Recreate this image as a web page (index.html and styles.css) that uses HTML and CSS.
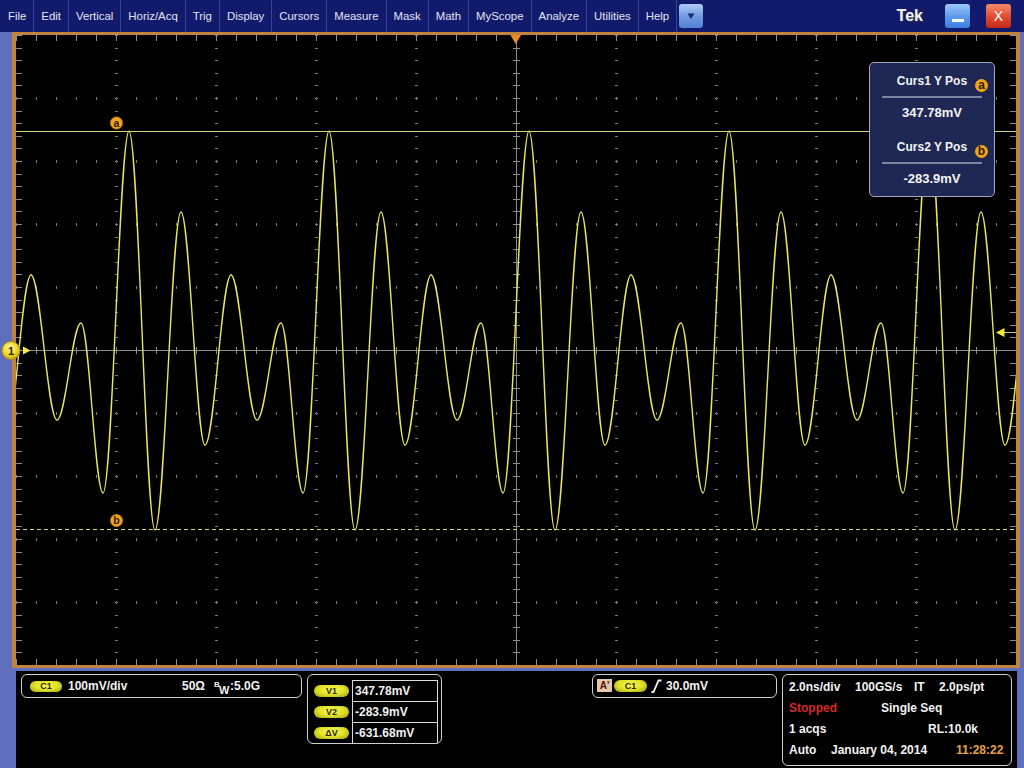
FILE: index.html
```html
<!DOCTYPE html>
<html>
<head>
<meta charset="utf-8">
<link rel="stylesheet" href="styles.css">
</head>
<body>
<div class="menubar">
  <nav class="menu">
    <span class="mi">File</span><span class="mi">Edit</span><span class="mi">Vertical</span><span class="mi">Horiz/Acq</span><span class="mi">Trig</span><span class="mi">Display</span><span class="mi">Cursors</span><span class="mi">Measure</span><span class="mi">Mask</span><span class="mi">Math</span><span class="mi">MyScope</span><span class="mi">Analyze</span><span class="mi">Utilities</span><span class="mi">Help</span>
  </nav>
  <span class="dd"><svg width="10" height="8" viewBox="0 0 10 8"><polygon points="1.5,1.5 8.5,1.5 5,7" fill="#1c2a7a"/></svg></span>
  <div class="win">
    <span class="tek">Tek</span>
    <span class="wbtn min"><span class="minbar"></span></span>
    <span class="wbtn close">X</span>
  </div>
</div>

<div class="scope">
  <svg class="grat" width="1000" height="630" viewBox="16 35 1000 630">
    <defs>
      <path id="period" d="M0,0 c9.45,0 16.55,145 26,145 c8.72,0 15.28,-97 24,-97 c8,0 14,170 22,170 c9.45,0 16.55,-362 26,-362 c9.45,0 16.55,399 26,399 c9.45,0 16.55,-318 26,-318 c8.72,0 15.28,233 24,233 c9.45,0 16.55,-170 26,-170"/>
    </defs>
    <g class="dots hdots">
      <line x1="16" x2="1016" y1="98.5" y2="98.5"/>
      <line x1="16" x2="1016" y1="161.5" y2="161.5"/>
      <line x1="16" x2="1016" y1="224.5" y2="224.5"/>
      <line x1="16" x2="1016" y1="287.5" y2="287.5"/>
      <line x1="16" x2="1016" y1="413.5" y2="413.5"/>
      <line x1="16" x2="1016" y1="476.5" y2="476.5"/>
      <line x1="16" x2="1016" y1="539.5" y2="539.5"/>
      <line x1="16" x2="1016" y1="602.5" y2="602.5"/>
    </g>
    <g class="dots vdots">
      <line x1="116.5" x2="116.5" y1="35" y2="665"/>
      <line x1="216.5" x2="216.5" y1="35" y2="665"/>
      <line x1="316.5" x2="316.5" y1="35" y2="665"/>
      <line x1="416.5" x2="416.5" y1="35" y2="665"/>
      <line x1="616.5" x2="616.5" y1="35" y2="665"/>
      <line x1="716.5" x2="716.5" y1="35" y2="665"/>
      <line x1="816.5" x2="816.5" y1="35" y2="665"/>
      <line x1="916.5" x2="916.5" y1="35" y2="665"/>
    </g>
    <g class="axis">
      <line x1="16" x2="1016" y1="350.5" y2="350.5"/>
      <line x1="516.5" x2="516.5" y1="35" y2="665"/>
    </g>
    <g class="ticks">
      <line class="th" x1="16" x2="1016" y1="350.5" y2="350.5"/>
      <line class="tv" x1="516.5" x2="516.5" y1="35" y2="665"/>
      <line class="eh" x1="16" x2="1016" y1="38" y2="38"/>
      <line class="eh" x1="16" x2="1016" y1="662" y2="662"/>
      <line class="ev" x1="19" x2="19" y1="35" y2="665"/>
      <line class="ev" x1="1013" x2="1013" y1="35" y2="665"/>
    </g>
    <line class="cur-a" x1="16" x2="1016" y1="131.5" y2="131.5"/>
    <line class="cur-b" x1="16" x2="1016" y1="529.5" y2="529.5"/>
    <g class="trace">
      <use href="#period" x="-169" y="275"/>
      <use href="#period" x="31" y="275"/>
      <use href="#period" x="231" y="275"/>
      <use href="#period" x="431" y="275"/>
      <use href="#period" x="631" y="275"/>
      <use href="#period" x="831" y="275"/>
    </g>
    <g class="badge">
      <circle cx="116.5" cy="123" r="6.2"/>
      <text x="116.5" y="126.8">a</text>
      <circle cx="116.5" cy="520.5" r="6.2"/>
      <text x="116.5" y="524.3">b</text>
    </g>
    <polygon class="trigpos" points="510.5,35 521,35 515.7,44"/>
    <line class="triglvl-line" x1="1003" x2="1016" y1="332.5" y2="332.5"/>
    <polygon class="triglvl" points="996,332.5 1004.5,328 1004.5,337"/>
  </svg>

  <svg class="chmark" width="32" height="22" viewBox="0 0 32 22">
    <defs>
      <radialGradient id="yg" cx="0.45" cy="0.35" r="0.65">
        <stop offset="0" stop-color="#fff59a"/>
        <stop offset="0.6" stop-color="#f0d828"/>
        <stop offset="1" stop-color="#c8a810"/>
      </radialGradient>
    </defs>
    <circle cx="10" cy="10.5" r="9" fill="url(#yg)" stroke="#a88a10" stroke-width="1"/>
    <text x="10" y="14.5" text-anchor="middle">1</text>
    <polygon points="22,6.5 29.5,10.5 22,14.5" fill="#f4ea40"/>
  </svg>

  <div class="cursor-box">
    <div class="cb-title">Curs1 Y Pos<span class="cb-badge">a</span></div>
    <div class="cb-sep"></div>
    <div class="cb-val">347.78mV</div>
    <div class="cb-title cb-title2">Curs2 Y Pos<span class="cb-badge">b</span></div>
    <div class="cb-sep"></div>
    <div class="cb-val">-283.9mV</div>
  </div>
</div>

<div class="readouts">
  <div class="grp">
    <div class="panel ch">
      <span class="pill">C1</span>
      <span class="ch-scale">100mV/div</span>
      <span class="ch-imp">50Ω</span>
      <span class="bw"><span class="bw-b">B</span><span class="bw-w">W</span></span><span>:5.0G</span>
    </div>
    <div class="panel cur">
      <div class="cur-grid">
        <span class="pill pill-v">V1</span><span class="cell">347.78mV</span>
        <span class="pill pill-v">V2</span><span class="cell">-283.9mV</span>
        <span class="pill pill-v">ΔV</span><span class="cell">-631.68mV</span>
      </div>
    </div>
  </div>
  <div class="grp">
    <div class="panel trig">
      <span class="abox">A'</span>
      <span class="pill pill-t">C1</span>
      <svg class="edge" width="11" height="14" viewBox="0 0 11 14"><path d="M0.5,13 L2.5,13 L7.5,1.5 L10.5,1.5" fill="none" stroke="#f2f2f2" stroke-width="1.8"/></svg>
      <span class="tlevel">30.0mV</span>
    </div>
    <div class="panel acq">
      <div class="row"><span class="w66">2.0ns/div</span><span class="w59">100GS/s</span><span class="w25">IT</span><span>2.0ps/pt</span></div>
      <div class="row"><span class="w92 stopped">Stopped</span><span>Single Seq</span></div>
      <div class="row"><span class="w139">1 acqs</span><span>RL:10.0k</span></div>
      <div class="row"><span class="w42">Auto</span><span class="w125">January 04, 2014</span><span class="time">11:28:22</span></div>
    </div>
  </div>
</div>
</body>
</html>
```
FILE: styles.css
```css
html, body {
  margin: 0;
  padding: 0;
}
body {
  width: 1024px;
  height: 768px;
  overflow: hidden;
  background: #5f6fbd;
  font-family: "Liberation Sans", Arial, sans-serif;
}

/* ---------- menu bar ---------- */
.menubar {
  height: 32px;
  background: #121a6c;
  display: flex;
  align-items: center;
  padding-left: 1px;
}
.menu {
  display: flex;
  height: 32px;
}
.mi {
  padding: 0 7px;
  line-height: 32px;
  font-size: 11.4px;
  color: #e2e5f2;
  border-right: 1px solid #34449a;
}
.dd {
  margin-left: 2px;
  width: 24px;
  height: 24px;
  box-sizing: border-box;
  border-radius: 3px;
  background: linear-gradient(#b0cbf4, #6f98e0 55%, #5282d4);
  display: flex;
  align-items: center;
  justify-content: center;
}
.win {
  margin-left: auto;
  display: flex;
  align-items: center;
  padding-right: 13px;
}
.tek {
  font-weight: bold;
  font-size: 16px;
  color: #f4f4f4;
  text-shadow: 1px 1px 1px #3a3a3a;
}
.wbtn {
  width: 25px;
  height: 24px;
  border-radius: 3px;
  box-sizing: border-box;
  position: relative;
  display: flex;
  align-items: center;
  justify-content: center;
}
.min {
  margin-left: 22px;
  background: linear-gradient(#9cc8fa, #5a98ec 55%, #3e7ee0);
}
.minbar {
  width: 12px;
  height: 3px;
  background: #f4f8ff;
  margin-top: 9px;
}
.close {
  margin-left: 16px;
  background: linear-gradient(#f88a6c, #e04a30 55%, #c4281a);
  color: #ffffff;
  font-size: 14px;
  line-height: 24px;
}

/* ---------- graticule ---------- */
.scope {
  margin-left: 12px;
  width: 1000px;
  height: 630px;
  border-style: solid;
  border-color: #bf8540;
  border-width: 3px 4px;
  background: #000;
  position: relative;
}
.grat {
  display: block;
}
.dots line {
  stroke: #7a7a7a;
  shape-rendering: crispEdges;
}
.hdots line {
  stroke-width: 3;
  stroke-dasharray: 1 19;
}
.vdots line {
  stroke-width: 3;
  stroke-dasharray: 1 11.6;
}
.axis line {
  stroke: #8a8a8a;
  stroke-width: 1;
  shape-rendering: crispEdges;
}
.ticks line {
  stroke: #8e8e8e;
  shape-rendering: crispEdges;
}
.ticks .th {
  stroke-width: 7;
  stroke-dasharray: 1 19;
}
.ticks .tv {
  stroke-width: 7;
  stroke-dasharray: 1 11.6;
}
.ticks .eh {
  stroke-width: 6;
  stroke-dasharray: 1 19;
}
.ticks .ev {
  stroke-width: 6;
  stroke-dasharray: 1 11.6;
}
.cur-a {
  stroke: #d6d47c;
  stroke-width: 1;
  shape-rendering: crispEdges;
}
.cur-b {
  stroke: #d6d47c;
  stroke-width: 1;
  stroke-dasharray: 4 3;
  shape-rendering: crispEdges;
}
.trace use {
  fill: none;
  stroke: #e8e65a;
  stroke-width: 1.4;
  stroke-linecap: round;
}
.badge circle {
  fill: #f0a41e;
  stroke: #9a5a0a;
  stroke-width: 0.8;
}
.badge text {
  font-family: "Liberation Sans", Arial, sans-serif;
  font-weight: bold;
  font-size: 10.5px;
  fill: #2e1a00;
  text-anchor: middle;
}
.trigpos {
  fill: #f28a22;
}
.triglvl {
  fill: #f2ea30;
}
.triglvl-line {
  stroke: #c8c470;
  stroke-width: 1;
}

.chmark {
  position: absolute;
  left: -15px;
  top: 305px;
  overflow: visible;
}
.chmark text {
  font-family: "Liberation Sans", Arial, sans-serif;
  font-weight: bold;
  font-size: 11px;
  fill: #2a2200;
}

.cursor-box {
  position: absolute;
  left: 853px;
  top: 27px;
  width: 126px;
  height: 135px;
  box-sizing: border-box;
  background: #1f2854;
  border: 1px solid #a2a6bc;
  border-radius: 5px;
  padding: 10px 12px 0 12px;
  color: #f4f4f4;
  font-weight: bold;
  font-size: 12px;
  text-align: center;
}
.cb-title {
  line-height: 16px;
  position: relative;
}
.cb-title2 {
  margin-top: 18px;
}
.cb-sep {
  height: 2px;
  background: #7e859e;
  margin: 7px 0 0 0;
}
.cb-val {
  line-height: 16px;
  margin-top: 7px;
  font-size: 13px;
}
.cb-badge {
  position: absolute;
  right: -6px;
  top: 6px;
  width: 13px;
  height: 13px;
  border-radius: 50%;
  background: #f0a41e;
  color: #2e1a00;
  font-size: 12px;
  line-height: 13px;
  text-align: center;
}

/* ---------- readouts ---------- */
.readouts {
  margin: 3px 0 0 16px;
  width: 1001px;
  height: 97px;
  box-sizing: border-box;
  background: #000;
  padding: 3px 5px;
  display: flex;
  justify-content: space-between;
  align-items: flex-start;
  color: #f2f2f2;
  font-weight: bold;
  font-size: 12px;
}
.grp {
  display: flex;
  gap: 5px;
  align-items: flex-start;
}
.panel {
  box-sizing: border-box;
  border: 1px solid #cfcfcf;
  border-radius: 6px;
}
.pill {
  display: inline-flex;
  align-items: center;
  justify-content: center;
  width: 32px;
  height: 11px;
  border-radius: 6px;
  background: radial-gradient(ellipse at 50% 40%, #f6f65c 0%, #e2e228 50%, #9a9a12 100%);
  color: #2a2a00;
  font-size: 9px;
  font-weight: bold;
}
.ch {
  width: 281px;
  height: 24px;
  display: flex;
  align-items: center;
  padding-left: 8px;
}
.ch-scale {
  margin-left: 6px;
  width: 114px;
}
.ch-imp {
  width: 32px;
}
.bw {
  display: inline-flex;
  position: relative;
  width: 16px;
  height: 16px;
}
.bw-b {
  position: absolute;
  left: 0;
  top: 2px;
  font-size: 8px;
  line-height: 9px;
}
.bw-w {
  position: absolute;
  left: 5px;
  top: 6px;
  font-size: 11px;
  line-height: 12px;
}
.cur {
  width: 135px;
  height: 70px;
  padding-left: 6px;
}
.cur-grid {
  margin-top: 5px;
  display: grid;
  grid-template-columns: 35px 86px;
  grid-auto-rows: 21px;
  column-gap: 3px;
}
.pill-v {
  width: 35px;
  height: 12px;
  align-self: center;
}
.cell {
  box-sizing: border-box;
  border: 1px solid #dcdcdc;
  border-bottom: none;
  padding-left: 2px;
  line-height: 20px;
}
.trig {
  width: 185px;
  height: 24px;
  display: flex;
  align-items: center;
  padding-left: 4px;
}
.abox {
  width: 15px;
  height: 13px;
  margin-top: -2px;
  background: #e6c6ac;
  color: #4a1408;
  font-size: 10px;
  line-height: 13px;
  text-align: center;
}
.pill-t {
  margin-left: 2px;
  width: 33px;
  height: 12px;
}
.edge {
  margin-left: 4px;
}
.tlevel {
  margin-left: 4px;
}
.acq {
  width: 230px;
  height: 92px;
  padding: 2px 0 0 6px;
}
.row {
  line-height: 21px;
  white-space: nowrap;
  display: flex;
}
.w66 { width: 66px; }
.w59 { width: 59px; }
.w25 { width: 25px; }
.w92 { width: 92px; }
.w139 { width: 139px; }
.w42 { width: 42px; }
.w125 { width: 125px; }
.stopped { color: #d42a2a; }
.time { color: #e6a044; }
```
